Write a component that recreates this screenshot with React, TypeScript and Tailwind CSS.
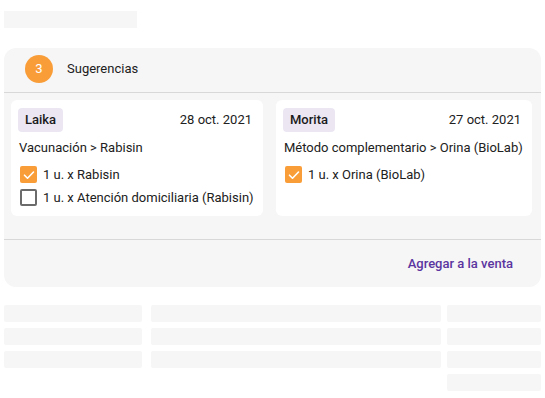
import React from "react";

type Item = { label: string; checked: boolean };

const suggestions: { pet: string; date: string; path: string; items: Item[] }[] = [
  {
    pet: "Laika",
    date: "28 oct. 2021",
    path: "Vacunación > Rabisin",
    items: [
      { label: "1 u. x Rabisin", checked: true },
      { label: "1 u. x Atención domiciliaria (Rabisin)", checked: false },
    ],
  },
  {
    pet: "Morita",
    date: "27 oct. 2021",
    path: "Método complementario > Orina (BioLab)",
    items: [{ label: "1 u. x Orina (BioLab)", checked: true }],
  },
];

const CheckBox = ({ checked }: { checked: boolean }) =>
  checked ? (
    <span className="flex shrink-0 items-center justify-center w-[17px] h-[17px] rounded-[2px] bg-[#f99d38]">
      <svg width="12" height="12" viewBox="0 0 12 12" fill="none">
        <path d="M1.5 6.2l3 3 6-6.2" stroke="white" strokeWidth="1.6" strokeLinecap="round" strokeLinejoin="round" />
      </svg>
    </span>
  ) : (
    <span className="block shrink-0 w-[17px] h-[17px] rounded-[2px] border-2 border-[#6b6b6b] bg-white" />
  );

const SuggestionCard = ({ s }: { s: (typeof suggestions)[number] }) => (
  <div className="bg-white rounded-[6px] h-[116px] pt-[8px] pl-[7px] pr-[11px] whitespace-nowrap">
    <div className="flex items-center justify-between">
      <span className="h-[24px] px-[7px] flex items-center rounded-[4px] bg-[#ece6f3] text-[#1a1a1a] font-medium">
        {s.pet}
      </span>
      <span>{s.date}</span>
    </div>
    <div className="mt-[6px] pl-[1px] h-[20px] flex items-center">{s.path}</div>
    <div className="mt-[8px] flex flex-col gap-[6px]">
      {s.items.map((it, idx) => (
        <label key={idx} className="flex items-center gap-[6px] pl-[2px] h-[17px]">
          <CheckBox checked={it.checked} />
          <span>{it.label}</span>
        </label>
      ))}
    </div>
  </div>
);

const Bar = ({ w }: { w: string }) => <div className={`${w} h-[17px] bg-[#f6f6f6] rounded-[2px]`} />;

export default function App() {
  return (
    <div
      className="w-[545px] h-[398px] bg-white pt-[11px] px-[4px] text-[13px] text-[#212121]"
      style={{ fontFamily: "Roboto, 'Liberation Sans', sans-serif" }}
    >
      <div className="w-[133px] h-[17px] bg-[#f6f6f6]" />

      <div className="mt-[20px] w-[537px] rounded-[12px] bg-[#f6f6f6]">
        <div className="h-[44px] flex items-center pl-[21px] gap-[14px] pb-[2px]">
          <span className="w-[28px] h-[28px] rounded-full bg-[#f99d38] text-white flex items-center justify-center text-[13px]">
            3
          </span>
          <span>Sugerencias</span>
        </div>
        <div className="h-px bg-[#d8d8d8]" />

        <div className="pt-[7px] pl-[7px] grid grid-cols-[252px_256px] gap-[13px]">
          {suggestions.map((s) => (
            <SuggestionCard key={s.pet} s={s} />
          ))}
        </div>

        <div className="mt-[23px] h-px bg-[#d8d8d8]" />
        <div className="h-[47px] flex items-center justify-end pr-[28px]">
          <button className="text-[#5b35a0] font-medium">Agregar a la venta</button>
        </div>
      </div>

      <div className="mt-[18px] grid grid-cols-[147px_296px_94px] gap-y-[6px]">
        <Bar w="w-[138px]" />
        <Bar w="w-[290px]" />
        <Bar w="w-[94px]" />
        <Bar w="w-[138px]" />
        <Bar w="w-[290px]" />
        <Bar w="w-[94px]" />
        <Bar w="w-[138px]" />
        <Bar w="w-[290px]" />
        <Bar w="w-[94px]" />
        <div className="col-start-3">
          <Bar w="w-[94px]" />
        </div>
      </div>
    </div>
  );
}
